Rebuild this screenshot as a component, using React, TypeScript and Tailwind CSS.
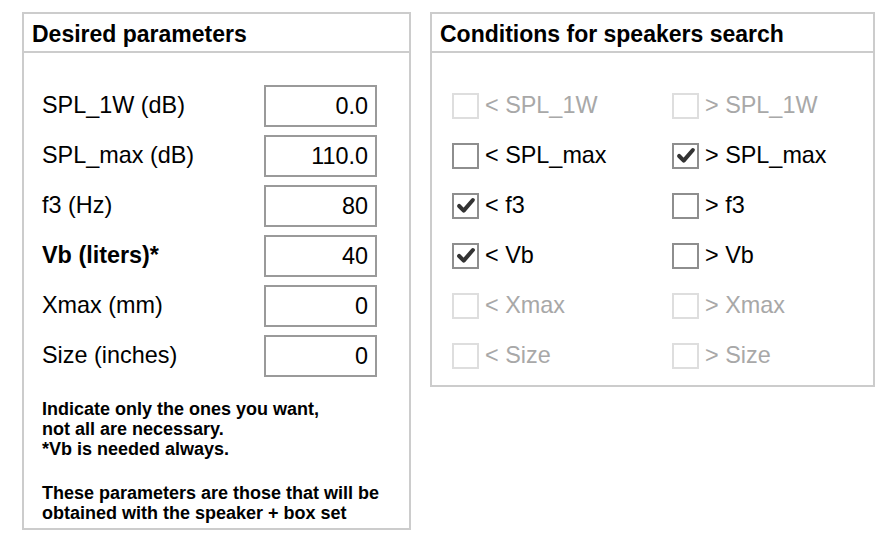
import { useState } from "react";

interface Param {
    key: string;
    label: string;
    value: string;
    bold?: boolean;
}

const params: Param[] = [
    { key: "spl1w", label: "SPL_1W (dB)", value: "0.0" },
    { key: "splmax", label: "SPL_max (dB)", value: "110.0" },
    { key: "f3", label: "f3 (Hz)", value: "80" },
    { key: "vb", label: "Vb (liters)*", value: "40", bold: true },
    { key: "xmax", label: "Xmax (mm)", value: "0" },
    { key: "size", label: "Size (inches)", value: "0" },
];

interface Cond {
    name: string;
    enabled: boolean;
    lt: boolean;
    gt: boolean;
}

const initialConds: Cond[] = [
    { name: "SPL_1W", enabled: false, lt: false, gt: false },
    { name: "SPL_max", enabled: true, lt: false, gt: true },
    { name: "f3", enabled: true, lt: true, gt: false },
    { name: "Vb", enabled: true, lt: true, gt: false },
    { name: "Xmax", enabled: false, lt: false, gt: false },
    { name: "Size", enabled: false, lt: false, gt: false },
];

function CheckBox({ label, checked, disabled, onToggle }: { label: string; checked: boolean; disabled: boolean; onToggle: () => void }) {
    return (
        <button
            type="button"
            onClick={disabled ? undefined : onToggle}
            className={`flex items-center gap-[6px] ${disabled ? "text-[#a8a8a8] cursor-default" : "text-black"}`}
        >
            <span
                className={`w-[27px] h-[26px] border-2 bg-white flex items-center justify-center ${disabled ? "border-[#dedede]" : "border-[#8e8e8e]"}`}
            >
                {checked && (
                    <svg viewBox="0 0 24 24" className="w-[22px] h-[22px]">
                        <path d="M4.5 12 L9.5 17 L19.5 5.5" fill="none" stroke="#333" strokeWidth="4.4" strokeLinecap="round" strokeLinejoin="round" />
                    </svg>
                )}
            </span>
            <span>{label}</span>
        </button>
    );
}

export default function App() {
    const [values, setValues] = useState<Record<string, string>>(
        Object.fromEntries(params.map(p => [p.key, p.value]))
    );
    const [conds, setConds] = useState<Cond[]>(initialConds);

    const toggle = (i: number, side: "lt" | "gt") => {
        setConds(conds.map((c, j) => (j === i ? { ...c, [side]: !c[side] } : c)));
    };

    return (
        <div className="flex items-start gap-[19px] pl-[22px] pt-[12px] bg-white min-h-[538px] text-black font-['Liberation_Sans',Arial,sans-serif]">
            {/* Desired parameters */}
            <div className="w-[389px] border-2 border-[#cccccc]">
                <h2 className="h-[39px] border-b-2 border-[#cccccc] px-[8px] pt-[3px] flex items-center text-[23px] font-bold">
                    Desired parameters
                </h2>
                <div className="pt-[28px] pl-[18px] pr-[32px] pb-[5px]">
                    {params.map(p => (
                        <div key={p.key} className="h-[50px] flex items-center justify-between">
                            <label className={`text-[23.4px] ${p.bold ? "font-bold" : ""}`}>{p.label}</label>
                            <input
                                type="text"
                                value={values[p.key]}
                                onChange={e => setValues({ ...values, [p.key]: e.target.value })}
                                className="w-[113px] h-[42px] border-2 border-[#9a9a9a] px-[7px] text-right text-[23.4px] outline-none"
                            />
                        </div>
                    ))}
                    <div className="mt-[18px] text-[18px] leading-[20px] font-bold whitespace-nowrap">
                        <p>
                            Indicate only the ones you want,
                            <br />
                            not all are necessary.
                            <br />
                            *Vb is needed always.
                        </p>
                        <p className="mt-[24px]">
                            These parameters are those that will be
                            <br />
                            obtained with the speaker + box set
                        </p>
                    </div>
                </div>
            </div>

            {/* Conditions for speakers search */}
            <div className="w-[445px] border-2 border-[#cccccc]">
                <h2 className="h-[39px] border-b-2 border-[#cccccc] px-[8px] pt-[3px] flex items-center text-[23px] font-bold">
                    Conditions for speakers search
                </h2>
                <div className="pt-[28px] pl-[20px] pb-[4px] grid grid-cols-[220px_1fr] text-[23.4px]">
                    {conds.map((c, i) => (
                        <div key={c.name} className="contents">
                            <div className="h-[50px] flex items-center">
                                <CheckBox label={`< ${c.name}`} checked={c.lt} disabled={!c.enabled} onToggle={() => toggle(i, "lt")} />
                            </div>
                            <div className="h-[50px] flex items-center">
                                <CheckBox label={`> ${c.name}`} checked={c.gt} disabled={!c.enabled} onToggle={() => toggle(i, "gt")} />
                            </div>
                        </div>
                    ))}
                </div>
            </div>
        </div>
    );
}
